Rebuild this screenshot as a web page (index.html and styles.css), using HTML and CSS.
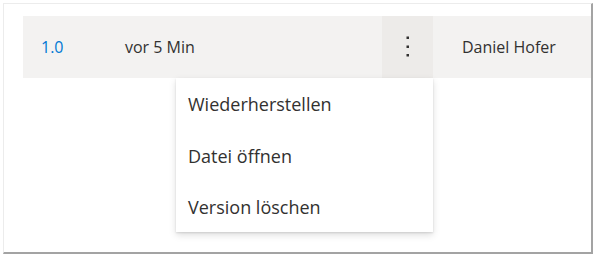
FILE: index.html
```html
<!DOCTYPE html>
<html lang="de">
<head>
<meta charset="utf-8">
<link rel="stylesheet" href="styles.css">
</head>
<body>
<div class="frame">
  <div class="row">
    <div class="cell version">1.0</div>
    <div class="cell date">vor 5 Min</div>
    <div class="actions">
      <button class="more" aria-label="Weitere Aktionen">
        <svg width="4" height="22" viewBox="0 0 4 22"><rect x="0.5" y="0.5" width="2.5" height="2.5" fill="#323130"/><rect x="0.5" y="9.5" width="2.5" height="2.5" fill="#323130"/><rect x="0.5" y="18" width="2.5" height="2.5" fill="#323130"/></svg>
      </button>
      <ul class="menu">
        <li class="item">Wiederherstellen</li>
        <li class="item">Datei öffnen</li>
        <li class="item">Version löschen</li>
      </ul>
    </div>
    <div class="cell author">Daniel Hofer</div>
  </div>
</div>
</body>
</html>
```
FILE: styles.css
```css
html, body {
  margin: 0;
  padding: 0;
  background: #ffffff;
}
body {
  width: 600px;
  height: 261px;
  font-family: "Open Sans", "Noto Sans", sans-serif;
  color: #323130;
}
.frame {
  position: relative;
  margin: 3px 0 0 3px;
  width: 590px;
  height: 251px;
  box-sizing: border-box;
  border-top: 1px solid #ececec;
  border-left: 1px solid #ececec;
  border-right: 2px solid #a3a3a3;
  border-bottom: 2px solid #a3a3a3;
  padding: 12px 0 0 19px;
}
.row {
  display: flex;
  align-items: stretch;
  height: 62px;
  background: #f3f2f1;
  font-size: 16px;
}
.cell {
  display: flex;
  align-items: center;
}
.version {
  width: 102px;
  padding-left: 18px;
  box-sizing: border-box;
  color: #0078d4;
}
.date {
  width: 257px;
}
.actions {
  position: relative;
  width: 51px;
}
.more {
  width: 51px;
  height: 62px;
  border: 0;
  margin: 0;
  padding: 0;
  background: #edebe9;
  display: flex;
  align-items: center;
  justify-content: center;
}
.author {
  padding-left: 29px;
}
.menu {
  position: absolute;
  top: 62px;
  right: 0;
  width: 257px;
  margin: 0;
  padding: 0;
  list-style: none;
  background: #ffffff;
  box-shadow: 0 3.2px 7.2px rgba(0,0,0,0.132), 0 0.6px 1.8px rgba(0,0,0,0.108);
  font-size: 18px;
}
.item {
  height: 52px;
  display: flex;
  align-items: center;
  padding-left: 12px;
}
.item:last-child {
  height: 50px;
}
```
